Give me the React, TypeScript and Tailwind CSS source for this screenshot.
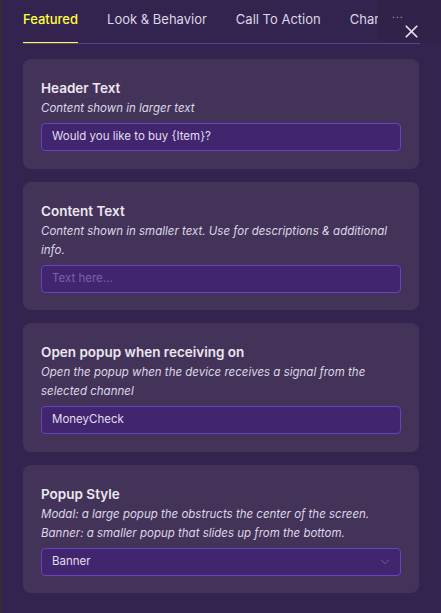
import { X, ChevronDown } from "lucide-react"

const cards = [
  {
    title: "Header Text",
    desc: "Content shown in larger text",
    value: "Would you like to buy {Item}?",
  },
  {
    title: "Content Text",
    desc: "Content shown in smaller text. Use for descriptions & additional info.",
    placeholder: "Text here...",
  },
  {
    title: "Open popup when receiving on",
    desc: "Open the popup when the device receives a signal from the selected channel",
    value: "MoneyCheck",
  },
  {
    title: "Popup Style",
    desc: "Modal: a large popup the obstructs the center of the screen. Banner: a smaller popup that slides up from the bottom.",
    value: "Banner",
    select: true,
  },
]

const tabs = ["Featured", "Look & Behavior", "Call To Action", "Channels"]

export default function App() {
  return (
    <div
      className="relative w-[441px] h-[613px] overflow-hidden bg-[#33244f] border-l border-[#2c3526] text-[#ece8f2]"
      style={{ fontFamily: "Inter, 'Liberation Sans', sans-serif" }}
    >
      <div className="pl-[22px] pr-[21px] pt-[10px]">
        <div className="flex h-[34px] overflow-hidden w-[355px]">
          {tabs.map((t, i) => (
            <div
              key={t}
              className={`shrink-0 h-full text-[13px] leading-[18px] whitespace-nowrap mr-[29px] ${
                i === 0
                  ? "text-[#ffff3b] font-medium border-b-2 border-[#ffff3b]"
                  : "text-[#ddd6e6]"
              }`}
            >
              {t}
            </div>
          ))}
        </div>
      </div>
      <div className="absolute top-0 right-0 w-[63px] h-[43px] bg-[#302249]">
        <span className="absolute left-[14px] top-[9px] text-[10px] leading-none text-[#bdb4cc] tracking-[1px]">
          ...
        </span>
        <X className="absolute left-[23px] top-[21px] text-[#e6e1ec]" size={21} strokeWidth={2} />
      </div>
      <div className="absolute left-[22px] right-[21px] top-[43px] h-px bg-[#5b3f94]" />

      <div className="flex flex-col gap-[13px] px-[22px] pt-[15px]">
        {cards.map((c) => (
          <div key={c.title} className="rounded-[8px] bg-[#433359] px-[18px] pt-[20px] pb-[17.5px]">
            <div className="text-[13.5px] font-semibold leading-[18px] text-[#ebe7f0]">{c.title}</div>
            <div className="mt-[2px] text-[11.5px] italic leading-[19px] text-[#ddd7e6]">{c.desc}</div>
            <div className="mt-[5px] flex h-[28px] items-center justify-between rounded-[4px] border border-[#6a40c4] bg-[#41256f] pl-[10px] pr-[8px] text-[11.5px]">
              {c.value ? (
                <span className="text-[#e4deed]">{c.value}</span>
              ) : (
                <span className="text-[#7c64a6]">{c.placeholder}</span>
              )}
              {c.select && <ChevronDown size={14} strokeWidth={1.2} className="text-[#8a70bd]" />}
            </div>
          </div>
        ))}
      </div>
    </div>
  )
}
